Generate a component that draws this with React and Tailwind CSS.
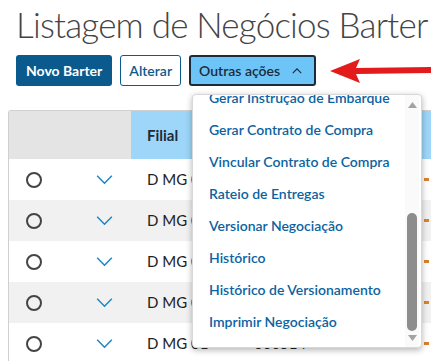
import React from 'react';

const menuItems = [
  'Gerar Instrução de Embarque',
  'Gerar Contrato de Compra',
  'Vincular Contrato de Compra',
  'Rateio de Entregas',
  'Versionar Negociação',
  'Histórico',
  'Histórico de Versionamento',
  'Imprimir Negociação',
];

const rows = [
  { filial: 'D MG 01', numero: '000510' },
  { filial: 'D MG 01', numero: '000511' },
  { filial: 'D MG 01', numero: '000512' },
  { filial: 'D MG 01', numero: '000513' },
  { filial: 'D MG 01', numero: '000514' },
];

const Chevron = ({ up, className }) => (
  <svg width="20" height="12" viewBox="0 0 20 12" className={className} fill="none" stroke="currentColor" strokeWidth="1.6">
    {up ? <path d="M4 9 L10 3 L16 9" /> : <path d="M2 2 L10 10 L18 2" />}
  </svg>
);

const App = () => {
  return (
    <div className="relative w-[431px] h-[361px] overflow-hidden bg-white" style={{ fontFamily: 'Lato, "Open Sans", sans-serif' }}>
      <h1 className="pl-4 pt-[2px] text-[35px] leading-[44px] font-light tracking-[-0.8px] text-[#444] whitespace-nowrap">
        Listagem de Negócios Barter
      </h1>

      <div className="flex items-center gap-2 pl-4 mt-[9px] whitespace-nowrap">
        <button className="h-[31px] px-[10px] rounded-[3px] bg-[#0b5a8e] text-white text-[14px] font-bold">
          Novo Barter
        </button>
        <button className="h-[31px] px-[8px] rounded-[3px] border border-[#0b5a8e] bg-white text-[#0b5a8e] text-[14px] font-semibold">
          Alterar
        </button>
        <button className="h-[31px] pl-[8px] pr-[10px] rounded-[3px] border-2 border-[#1c2b3a] bg-[#6cc4f7] text-[#1c2b3a] text-[14px] font-semibold flex items-center gap-[10px]">
          Outras ações
          <Chevron up className="w-[14px] h-[10px]" />
        </button>
        <div className="flex-1 flex items-center ml-[6px]">
          <svg width="104" height="30" viewBox="0 0 104 30">
            <polygon points="0,15 30,3 26,12 104,11 104,17 26,18 30,27" fill="#e31b1b" />
          </svg>
        </div>
      </div>

      {/* tabela */}
      <div className="ml-2 mt-[24px] border-l border-t border-[#d0d0d0] rounded-tl-[3px] text-[15px] text-[#222]">
        <div className="flex h-[48px]">
          <div className="w-[122px] bg-[#e4e4e4]" />
          <div className="flex-1 bg-[#9dd6f9] flex items-center pl-[16px] font-bold text-[#1c2b3a] text-[15px]">Filial</div>
        </div>
        {rows.map((row, i) => (
          <div key={i} className={`flex items-center h-[41px] ${i % 2 === 1 ? 'bg-[#f1f1f1]' : 'bg-white'}`}>
            <div className="w-[50px] flex justify-center">
              <span className="w-[16px] h-[16px] rounded-full border-2 border-[#444]" />
            </div>
            <div className="w-[72px] flex justify-end pr-[17px] text-[#1a85c4]">
              <Chevron className="w-[19px] h-[11px]" />
            </div>
            <div className="w-[123px] pl-[16px]">{row.filial}</div>
            <div className="flex-1">{i === rows.length - 1 ? row.numero : ''}</div>
            <div className="w-[5px] h-[3px] bg-[#d9822b] mr-[2px]" />
          </div>
        ))}
      </div>

      {/* menu Outras ações */}
      <div className="absolute left-[192px] top-[94px] w-[230px] h-[254px] bg-white rounded-[4px] border border-[#d8d8d8] shadow-[0_2px_6px_rgba(0,0,0,0.3)] overflow-hidden">
        <div className="flex h-full">
          <div className="flex-1 overflow-hidden">
            <ul className="-mt-[14px]">
              {menuItems.map((item) => (
                <li key={item} className="h-[32px] flex items-center pl-[16px] text-[14px] font-semibold text-[#0c63a0] whitespace-nowrap">
                  {item}
                </li>
              ))}
            </ul>
          </div>
          <div className="w-[14px] bg-[#fafafa] flex flex-col items-center pt-[7px] pb-[6px] mr-[2px]">
            <svg width="9" height="6" viewBox="0 0 9 6"><polygon points="4.5,0 9,6 0,6" fill="#a3a3a3" /></svg>
            <div className="flex-1 w-full flex flex-col justify-end px-[2px] pb-[4px]">
              <div className="h-[118px] rounded-full bg-[#8d8d8d]" />
            </div>
            <svg width="9" height="6" viewBox="0 0 9 6"><polygon points="0,0 9,0 4.5,6" fill="#a3a3a3" /></svg>
          </div>
        </div>
      </div>
    </div>
  );
};

export default App;
